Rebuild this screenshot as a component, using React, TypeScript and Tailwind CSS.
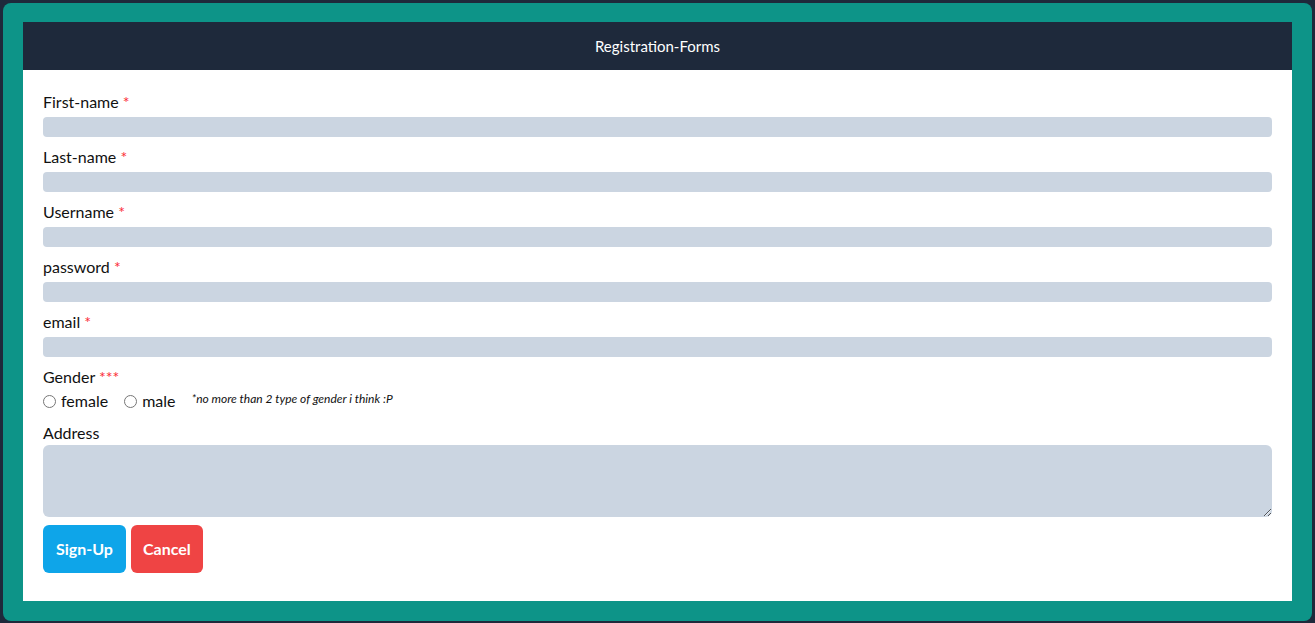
import React from 'react';

const fields = ['First-name', 'Last-name', 'Username', 'password', 'email'];

export default function App() {
  return (
    <div
      className="h-screen bg-[#1e293b] p-[3px] pb-[2px]"
      style={{ fontFamily: 'Lato, "Noto Sans", sans-serif' }}
    >
      <div className="flex h-full flex-col rounded-lg bg-[#0d9488] px-5 pt-[19px] pb-[20px]">
        <div className="flex h-full flex-col bg-white">
          <div className="flex h-12 items-center justify-center bg-[#1e293b] text-[15px] text-white">
            Registration-Forms
          </div>
          <form className="flex flex-col px-5 pt-5 text-[16px] text-[#111]">
            {fields.map((f) => (
              <div key={f} className="mb-2 flex flex-col">
                <label className="leading-6">
                  {f} <span className="text-red-500">*</span>
                </label>
                <input className="mt-[3px] h-5 w-full rounded-sm bg-[#cbd5e1] outline-none" />
              </div>
            ))}
            <div className="mb-2 flex flex-col">
              <label className="leading-6">
                Gender <span className="text-red-500">***</span>
              </label>
              <div className="flex h-6 items-center">
                <label className="flex items-center">
                  <input type="radio" name="gender" className="m-0 h-[13px] w-[13px]" />
                  <span className="ml-[5px]">female</span>
                </label>
                <label className="ml-4 flex items-center">
                  <input type="radio" name="gender" className="m-0 h-[13px] w-[13px]" />
                  <span className="ml-[5px]">male</span>
                </label>
                <span className="mb-1 ml-4 text-[12px] italic">
                  *no more than 2 type of gender i think :P
                </span>
              </div>
            </div>
            <div className="flex flex-col">
              <label className="leading-6">Address</label>
              <textarea className="h-[72px] w-full rounded-md bg-[#cbd5e1] outline-none" />
            </div>
            <div className="mt-2 flex gap-[5px]">
              <button
                type="button"
                className="rounded-md bg-[#0ea5e9] px-[13px] py-3 font-bold leading-6 text-white"
              >
                Sign-Up
              </button>
              <button
                type="button"
                className="rounded-md bg-[#ef4444] px-3 py-3 font-bold leading-6 text-white"
              >
                Cancel
              </button>
            </div>
          </form>
        </div>
      </div>
    </div>
  );
}
